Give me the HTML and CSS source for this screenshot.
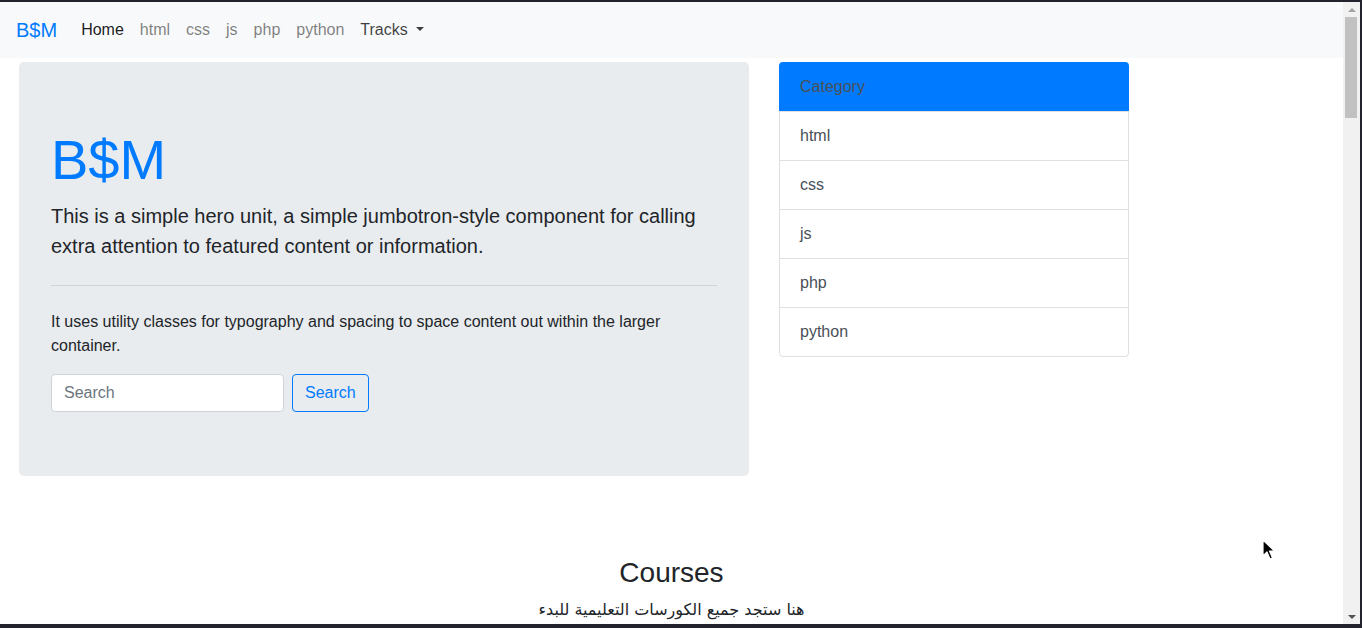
FILE: index.html
```html
<!DOCTYPE html>
<html lang="en">
<head>
<meta charset="utf-8">
<title>B$M</title>
<link rel="stylesheet" href="styles.css">
</head>
<body>
<div class="frame">
  <div class="window">
    <div class="viewport">
      <nav class="navbar">
        <a class="brand" href="#">B$M</a>
        <ul class="nav">
          <li><a class="nav-link active" href="#">Home</a></li>
          <li><a class="nav-link" href="#">html</a></li>
          <li><a class="nav-link" href="#">css</a></li>
          <li><a class="nav-link" href="#">js</a></li>
          <li><a class="nav-link" href="#">php</a></li>
          <li><a class="nav-link" href="#">python</a></li>
          <li><a class="nav-link dropdown" href="#">Tracks<span class="caret"></span></a></li>
        </ul>
      </nav>
      <main class="content">
        <div class="top-row">
          <div class="jumbotron">
            <h1 class="display">B$M</h1>
            <p class="lead">This is a simple hero unit, a simple jumbotron-style component for calling extra attention to featured content or information.</p>
            <hr class="divider">
            <p class="body-text">It uses utility classes for typography and spacing to space content out within the larger container.</p>
            <form class="search-form">
              <input class="search-input" type="search" placeholder="Search">
              <button class="search-btn" type="button">Search</button>
            </form>
          </div>
          <div class="card">
            <div class="card-header">Category</div>
            <ul class="list-group">
              <li class="list-item">html</li>
              <li class="list-item">css</li>
              <li class="list-item">js</li>
              <li class="list-item">php</li>
              <li class="list-item">python</li>
            </ul>
          </div>
        </div>
        <section class="courses">
          <h3 class="courses-title">Courses</h3>
          <p class="courses-sub" dir="rtl">هنا ستجد جميع الكورسات التعليمية للبدء</p>
        </section>
      </main>
    </div>
    <div class="scrollbar">
      <div class="sb-btn"><span class="tri-up"></span></div>
      <div class="sb-thumb"></div>
      <div class="sb-track"></div>
      <div class="sb-btn"><span class="tri-down"></span></div>
    </div>
  </div>
</div>
<svg class="cursor" width="14" height="22" viewBox="0 0 14 22" aria-hidden="true">
  <path d="M1 1 L1 17 L5 13 L8 20 L10.5 19 L7.5 12 L12.5 12 Z" fill="#000" stroke="#fff" stroke-width="1.2" stroke-linejoin="round"/>
</svg>
</body>
</html>
```

FILE: styles.css
```css
* { box-sizing: border-box; }

html, body {
  margin: 0;
  padding: 0;
  overflow: hidden;
  width: 1362px;
  height: 628px;
}

body {
  font-family: "Liberation Sans", Arial, "DejaVu Sans", sans-serif;
  font-size: 16px;
  line-height: 1.5;
  color: #212529;
  background: #22232c;
  position: relative;
}

.frame {
  width: 1362px;
  height: 628px;
  padding: 2px 2px 4px 0;
  background: #22232c;
}

.window {
  display: flex;
  height: 622px;
  background: #fff;
}

.viewport {
  flex: 1;
  min-width: 0;
  overflow: hidden;
  background: #fff;
}

/* navbar */
.navbar {
  display: flex;
  align-items: center;
  height: 56px;
  padding: 8px 16px;
  background: #f8f9fa;
}

.brand {
  font-size: 20px;
  line-height: 30px;
  padding: 5px 0;
  margin-right: 16px;
  color: #007bff;
  text-decoration: none;
}

.nav {
  display: flex;
  list-style: none;
  margin: 0;
  padding: 0;
}

.nav-link {
  display: block;
  padding: 8px;
  color: rgba(0, 0, 0, 0.5);
  text-decoration: none;
}

.nav-link.active { color: rgba(0, 0, 0, 0.9); }
.nav-link.dropdown { color: rgba(0, 0, 0, 0.75); }

.caret {
  display: inline-block;
  margin-left: 0.5em;
  vertical-align: 0.255em;
  border-top: 0.3em solid;
  border-right: 0.3em solid transparent;
  border-left: 0.3em solid transparent;
}

/* content */
.content {
  padding: 4px 0 0 19px;
}

.top-row {
  display: flex;
  align-items: flex-start;
}

.jumbotron {
  width: 730px;
  padding: 64px 32px;
  margin-bottom: 32px;
  background: #e9ecef;
  border-radius: 4.8px;
}

.display {
  margin: 0 0 8px;
  font-size: 56px;
  font-weight: 300;
  line-height: 1.2;
  color: #007bff;
}

.lead {
  margin: 0 0 16px;
  font-size: 20px;
  font-weight: 300;
  line-height: 1.5;
}

.divider {
  margin: 24px 0;
  border: 0;
  border-top: 1px solid rgba(0, 0, 0, 0.1);
  height: 0;
}

.body-text {
  margin: 0 0 16px;
}

.search-form {
  display: flex;
  align-items: center;
}

.search-input {
  width: 233px;
  height: 38px;
  padding: 6px 12px;
  font: inherit;
  font-size: 16px;
  color: #495057;
  background: #fff;
  border: 1px solid #ced4da;
  border-radius: 4px;
  margin-right: 8px;
  outline: none;
}

.search-input::placeholder { color: #6c757d; }

.search-btn {
  height: 38px;
  padding: 6px 12px;
  font: inherit;
  font-size: 16px;
  color: #007bff;
  background: transparent;
  border: 1px solid #007bff;
  border-radius: 4px;
}

/* card */
.card {
  width: 350px;
  margin-left: 30px;
  border-radius: 4px;
}

.card-header {
  height: 49px;
  padding: 13px 21px 12px;
  line-height: 24px;
  background: #007bff;
  color: #495057;
  border-radius: 4px 4px 0 0;
}

.list-group {
  list-style: none;
  margin: 0;
  padding: 0;
  border: 1px solid rgba(0, 0, 0, 0.125);
  border-radius: 0 0 4px 4px;
}

.list-item {
  height: 49px;
  padding: 12px 20px;
  line-height: 24px;
  color: #495057;
  border-top: 1px solid rgba(0, 0, 0, 0.125);
}

.list-item:first-child {
  border-top: 0;
  height: 48px;
}

/* courses */
.courses {
  margin-top: 48px;
  margin-left: -19px;
  text-align: center;
}

.courses-title {
  margin: 0 0 8px;
  font-size: 28px;
  font-weight: 500;
  line-height: 1.2;
}

.courses-sub {
  margin: 0;
  font-family: "DejaVu Sans", "Noto Sans", sans-serif;
  font-size: 16px;
  text-align: center;
}

/* scrollbar */
.scrollbar {
  width: 17px;
  display: flex;
  flex-direction: column;
  background: #f1f1f1;
}

.sb-btn {
  height: 15px;
  display: flex;
  align-items: center;
  justify-content: center;
}

.tri-up {
  width: 0;
  height: 0;
  border-left: 4px solid transparent;
  border-right: 4px solid transparent;
  border-bottom: 4px solid #a3a3a3;
}

.tri-down {
  width: 0;
  height: 0;
  border-left: 4px solid transparent;
  border-right: 4px solid transparent;
  border-top: 4px solid #505050;
}

.sb-thumb {
  height: 101px;
  margin: 0 3px 0 2px;
  background: #c1c1c1;
}

.sb-track { flex: 1; }

.cursor {
  position: absolute;
  left: 1262px;
  top: 539px;
}
```
